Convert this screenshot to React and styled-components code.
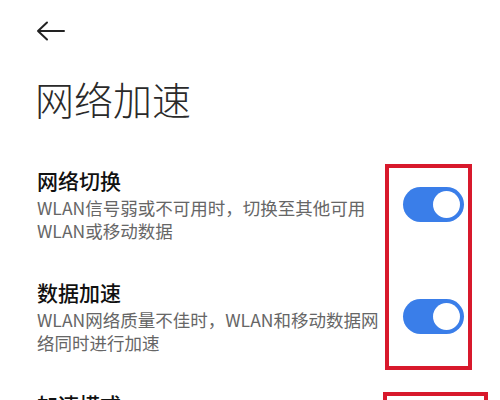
import styled, { createGlobalStyle } from "styled-components";

const GlobalStyle = createGlobalStyle`
  html, body {
    margin: 0;
    padding: 0;
    background: #ffffff;
  }
  body {
    font-family: "Noto Sans CJK SC", "Noto Sans", sans-serif;
  }
`;

const Page = styled.div`
  position: relative;
  width: 500px;
  height: 400px;
  overflow: hidden;
  background: #fff;
`;

const TopBar = styled.div`
  height: 62px;
  display: flex;
  align-items: center;
  padding-left: 36px;
`;

const BackButton = styled.button`
  display: flex;
  align-items: center;
  border: none;
  background: none;
  padding: 0;
  cursor: pointer;
`;

const PageTitle = styled.h1`
  margin: 10px 0 0;
  padding-left: 35px;
  height: 52px;
  font-size: 39px;
  line-height: 52px;
  font-weight: 300;
  color: #2a2a2a;
`;

const List = styled.div`
  margin-top: 24px;
  display: flex;
  flex-direction: column;
`;

const Row = styled.div`
  display: flex;
  align-items: center;
  justify-content: space-between;
  padding: 18px 36px 18px 37px;
`;

const TextBlock = styled.div`
  display: flex;
  flex-direction: column;
  width: 352px;
  flex-shrink: 0;
`;

const RowTitle = styled.div`
  font-size: 21px;
  line-height: 28px;
  font-weight: 500;
  color: #111;
`;

const RowDesc = styled.div`
  margin-top: 2px;
  font-size: 17.5px;
  line-height: 23px;
  color: #666;
`;

const Toggle = styled.div`
  width: 61px;
  height: 35px;
  box-sizing: border-box;
  border-radius: 18px;
  padding: 4px;
  display: flex;
  align-items: center;
  justify-content: ${(p) => (p.on ? "flex-end" : "flex-start")};
  background: ${(p) => (p.on ? "#3a7ee9" : "#d0d0d0")};
`;

const Knob = styled.div`
  width: 27px;
  height: 27px;
  border-radius: 50%;
  background: #fff;
`;

const Mark = styled.div`
  position: absolute;
  box-sizing: border-box;
  border: 4px solid #d8192c;
  left: ${(p) => p.x}px;
  top: ${(p) => p.y}px;
  width: ${(p) => p.w}px;
  height: ${(p) => p.h}px;
`;

const items = [
  {
    title: "网络切换",
    desc: "WLAN信号弱或不可用时，切换至其他可用WLAN或移动数据",
    on: true,
  },
  {
    title: "数据加速",
    desc: "WLAN网络质量不佳时，WLAN和移动数据网络同时进行加速",
    on: true,
  },
  {
    title: "加速模式",
    desc: "",
    on: null,
  },
];

export default function App() {
  return (
    <Page>
      <GlobalStyle />
      <TopBar>
        <BackButton aria-label="返回">
          <svg width="30" height="20" viewBox="0 0 30 20" fill="none">
            <path
              d="M2 10 H28 M11 1.5 L2 10 L11 18.5"
              stroke="#222"
              strokeWidth="2"
              strokeLinecap="round"
              strokeLinejoin="round"
            />
          </svg>
        </BackButton>
      </TopBar>
      <PageTitle>网络加速</PageTitle>
      <List>
        {items.map((it) => (
          <Row key={it.title}>
            <TextBlock>
              <RowTitle>{it.title}</RowTitle>
              {it.desc && <RowDesc>{it.desc}</RowDesc>}
            </TextBlock>
            {it.on !== null && (
              <Toggle on={it.on}>
                <Knob />
              </Toggle>
            )}
          </Row>
        ))}
      </List>
      <Mark x={385} y={164} w={87} h={206} />
      <Mark x={383} y={392} w={105} h={40} />
    </Page>
  );
}
